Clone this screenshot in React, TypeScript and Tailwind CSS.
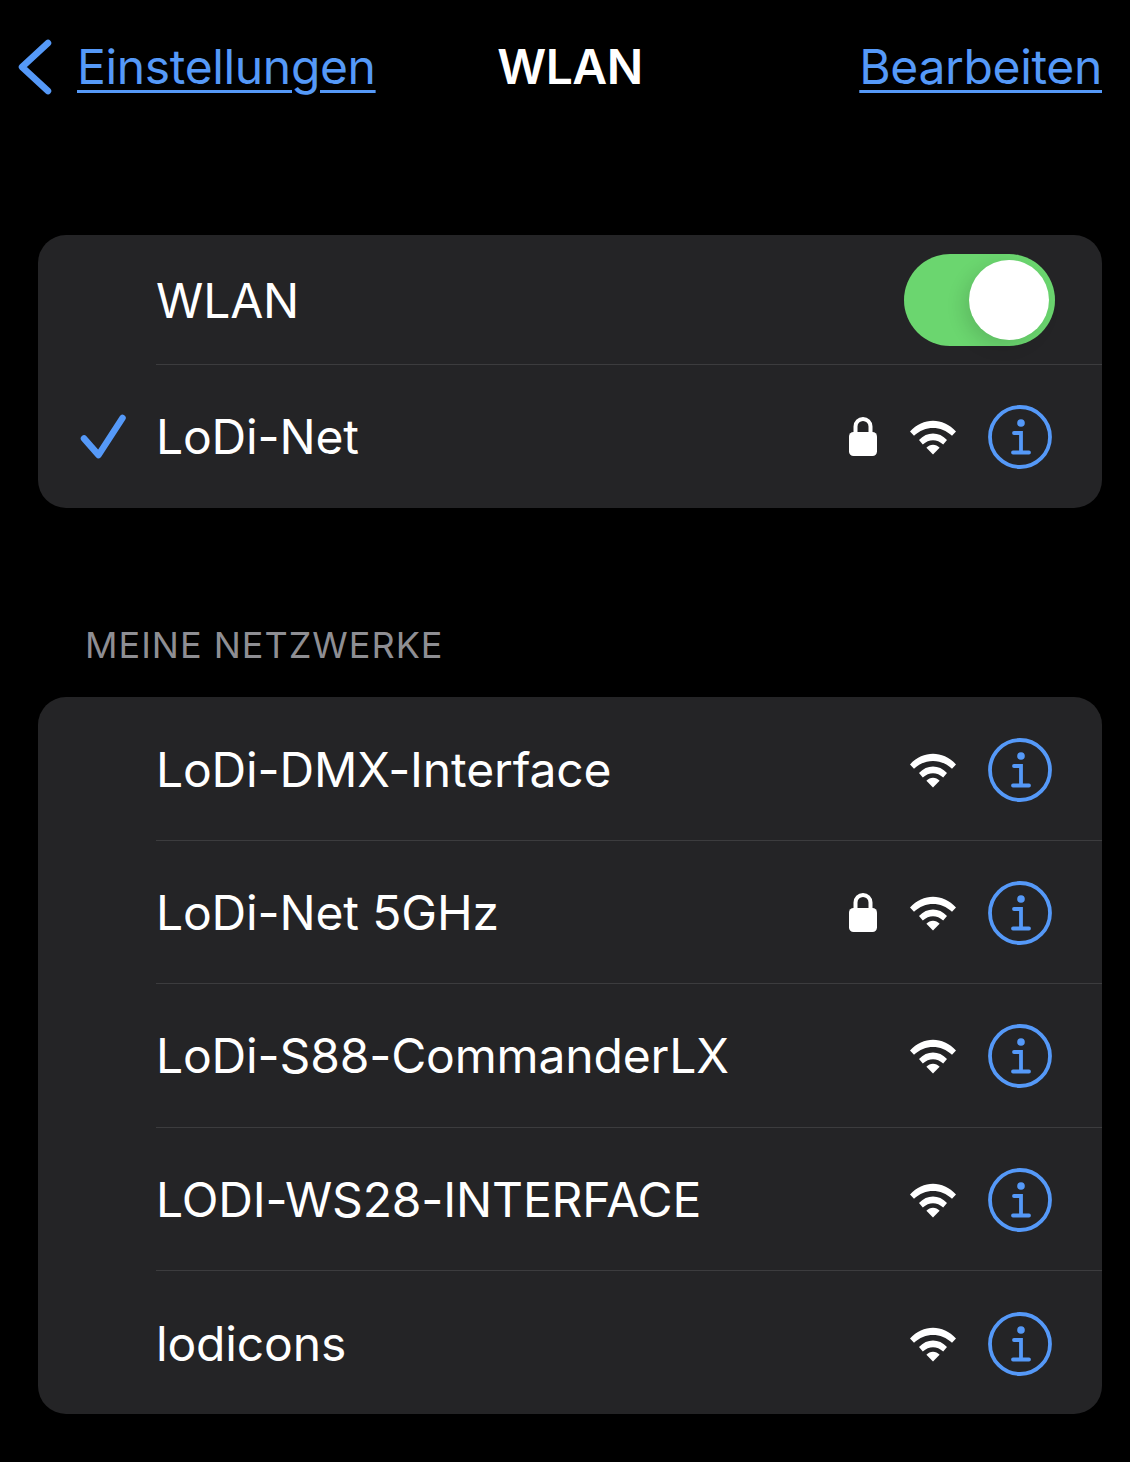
import React from "react";

const networks = [
  { name: "LoDi-DMX-Interface", locked: false },
  { name: "LoDi-Net 5GHz", locked: true },
  { name: "LoDi-S88-CommanderLX", locked: false },
  { name: "LODI-WS28-INTERFACE", locked: false },
  { name: "lodicons", locked: false },
];

function LockIcon() {
  return (
    <svg width="28" height="40" viewBox="0 0 28 40" className="block">
      <path d="M6.5 18V10.5a7.5 7.5 0 0 1 15 0V18" fill="none" stroke="#fff" strokeWidth="4" />
      <rect x="0" y="16" width="28" height="24" rx="4.5" fill="#fff" />
    </svg>
  );
}

function WifiIcon() {
  return (
    <svg width="46" height="36" viewBox="0 0 46 36" className="block">
      <path d="M0 12.4 C13 -1.8 33 -1.8 46 12.4 L42 16.8 C31 6.4 15 6.4 4 16.8 Z" fill="#fff" />
      <path d="M9 21 C17 12.4 29 12.4 37 21 L33.2 25.6 C27 19.8 19 19.8 12.8 25.6 Z" fill="#fff" />
      <path d="M16.4 28.8 C20 24.8 26 24.8 29.6 28.8 L23 35.6 Z" fill="#fff" />
    </svg>
  );
}

function InfoIcon() {
  return (
    <svg width="64" height="64" viewBox="0 0 64 64" className="block">
      <circle cx="32" cy="32" r="30" fill="none" stroke="#5599f8" strokeWidth="3.8" />
      <circle cx="33" cy="18" r="3.8" fill="#5599f8" />
      <path d="M26 28 H33 V47 M25 47.5 H41" fill="none" stroke="#5599f8" strokeWidth="3.8" strokeLinecap="round" />
    </svg>
  );
}

function CheckIcon() {
  return (
    <svg width="46" height="46" viewBox="0 0 46 46" className="block">
      <path d="M4 24.5 L18.5 41 L42.5 4" fill="none" stroke="#5599f8" strokeWidth="6.5" strokeLinecap="round" strokeLinejoin="round" />
    </svg>
  );
}

function ChevronIcon() {
  return (
    <svg width="34" height="56" viewBox="0 0 34 56" className="block">
      <path d="M30 4 L4 28 L30 52" fill="none" stroke="#5599f8" strokeWidth="6.5" strokeLinecap="round" strokeLinejoin="round" />
    </svg>
  );
}

function Row({
  name,
  locked,
  checked,
  last,
}: {
  name: string;
  locked?: boolean;
  checked?: boolean;
  last?: boolean;
}) {
  return (
    <div className="flex">
      <div className="flex w-[118px] shrink-0 items-center pl-[42px]">
        {checked && <CheckIcon />}
      </div>
      <div
        className={`flex h-[143.4px] flex-1 items-center pr-[50px] ${checked ? "" : "pt-[2px]"} ${
          last ? "" : "border-b border-[#3c3c3e]"
        }`}
      >
        <span className="flex-1 text-[48px] tracking-[-0.15px] text-white">{name}</span>
        {locked && (
          <div className="mb-[2px] mr-[33px]">
            <LockIcon />
          </div>
        )}
        <div className="mr-[32px]">
          <WifiIcon />
        </div>
        <InfoIcon />
      </div>
    </div>
  );
}

export default function App() {
  return (
    <div
      className="h-[1462px] overflow-hidden bg-black"
      style={{ fontFamily: "Inter, 'Liberation Sans', sans-serif" }}
    >
      <header className="grid h-[135px] grid-cols-[1fr_auto_1fr] items-center pb-[2px] pl-[18px] pr-[8px]">
        <div className="flex items-center gap-[25px]">
          <ChevronIcon />
          <a className="text-[48px] tracking-[-0.35px] text-[#5599f8] underline decoration-[3px] underline-offset-[6px]">
            Einstellungen
          </a>
        </div>
        <h1 className="text-[48px] font-semibold tracking-[-0.5px] text-white">WLAN</h1>
        <a className="mr-[20px] text-right text-[48px] tracking-[-0.35px] text-[#5599f8] underline decoration-[3px] underline-offset-[6px]">
          Bearbeiten
        </a>
      </header>

      <div className="mx-[38px] mt-[100px] w-[1064px] overflow-hidden rounded-[28px] bg-[#242426]">
        <div className="flex">
          <div className="w-[118px] shrink-0" />
          <div className="flex h-[130px] flex-1 items-center border-b border-[#3c3c3e] pr-[47px]">
            <span className="flex-1 pt-[2px] text-[48px] tracking-[-0.15px] text-white">WLAN</span>
            <div className="flex h-[92px] w-[151px] items-center justify-end rounded-full bg-[#6bd66f] pr-[6px]">
              <div className="h-[80px] w-[80px] rounded-full bg-white shadow-[-6px_6px_18px_rgba(0,0,0,0.12)]" />
            </div>
          </div>
        </div>
        <Row name="LoDi-Net" locked checked last />
      </div>

      <div className="ml-[85px] mt-[115px] text-[36px] leading-[44px] tracking-[1px] text-[#8e8e93]">
        MEINE NETZWERKE
      </div>

      <div className="mx-[38px] mt-[30px] w-[1064px] overflow-hidden rounded-[28px] bg-[#242426]">
        {networks.map((n, i) => (
          <Row key={n.name} name={n.name} locked={n.locked} last={i === networks.length - 1} />
        ))}
      </div>
    </div>
  );
}
